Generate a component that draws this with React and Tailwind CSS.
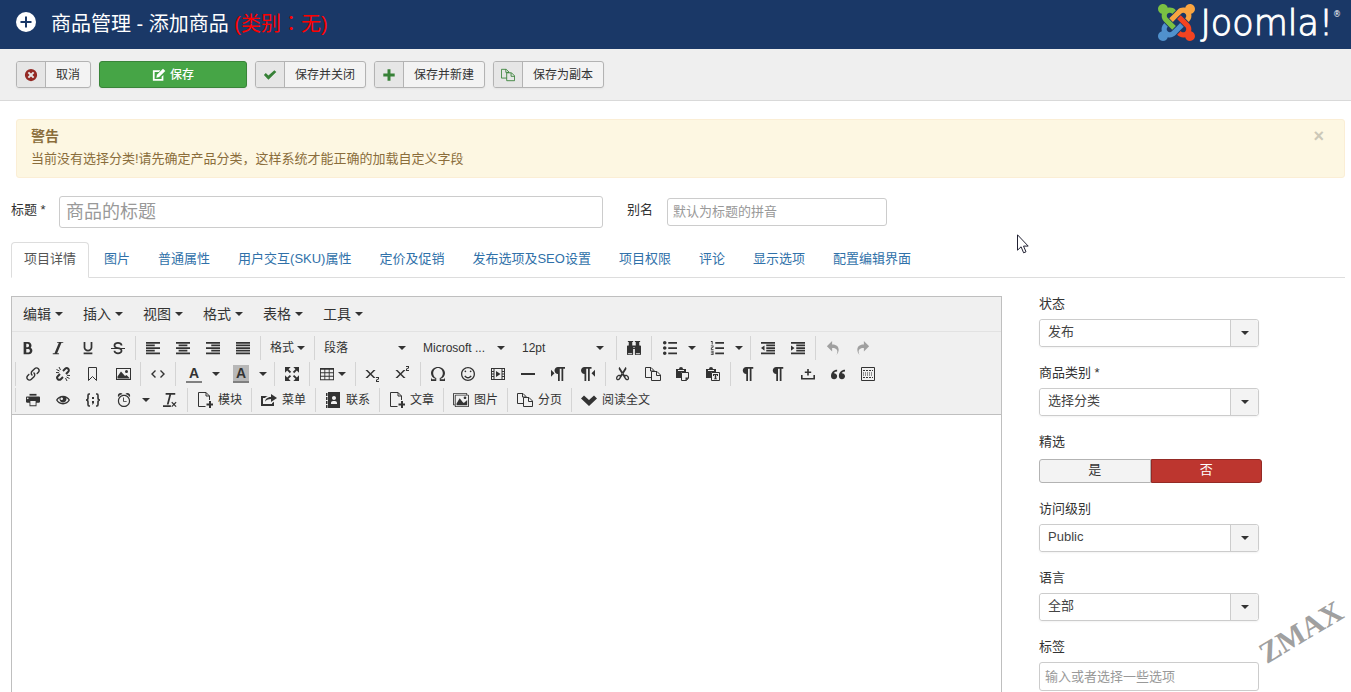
import { useState } from 'react'
import {
  ImAddressBook, ImAlarm, ImBinoculars, ImBold, ImClearFormatting, ImEnlarge, ImEye,
  ImImages, ImIndentDecrease, ImIndentIncrease, ImItalic, ImLink, ImList2, ImListNumbered, ImLtr,
  ImOmega, ImParagraphCenter, ImParagraphJustify, ImParagraphLeft, ImParagraphRight,
  ImPilcrow, ImPrinter, ImQuotesLeft, ImRedo2, ImRtl, ImScissors, ImShare, ImSmile,
  ImStrikethrough, ImSubscript, ImSuperscript, ImTable2, ImUnderline, ImUndo2,
} from 'react-icons/im'

const tabs = ['项目详情', '图片', '普通属性', '用户交互(SKU)属性', '定价及促销', '发布选项及SEO设置', '项目权限', '评论', '显示选项', '配置编辑界面']
const menus = ['编辑', '插入', '视图', '格式', '表格', '工具']

/* ---------- icons ---------- */

const Svg = ({ children, className = 'size-4', ...rest }) => (
  <svg viewBox="0 0 16 16" fill="currentColor" className={className} aria-hidden="true" {...rest}>
    {children}
  </svg>
)

const Line = ({ children }) => (
  <Svg fill="none" stroke="currentColor">{children}</Svg>
)

const UnlinkIcon = () => (
  <Line>
    <path d="M8 5 10.200 2.800a2.100 2.100 0 0 1 3 3L11 8M8 11l-2.200 2.200a2.100 2.100 0 0 1-3-3L5 8" strokeWidth="2" />
    <path d="M1.500 3.500l3 1.500M4 1l1.500 3M1 6.500l3 .2M14.500 12.500l-3-1.500M12 15l-1.500-3M15 9.500l-3-.2" />
  </Line>
)
const BookmarkIcon = () => <Line><path d="M3.500 1.500h8v13L7.500 10.500l-4 4z" /></Line>
const ImageIcon = () => (
  <Svg>
    <path d="M1 2h15v12H1zM2 3v10h13V3z" fillRule="evenodd" />
    <path d="M2.500 12.500v-2l3.500-5 4 4.500 1.500-1 3 3v.5z" />
    <circle cx="11.500" cy="5.500" r="1.500" />
  </Svg>
)
const CodeIcon = () => <Line><path d="M5.500 4.500 2 8l3.500 3.500M10.500 4.500 14 8l-3.500 3.500" strokeWidth="1.400" /></Line>
const MediaIcon = () => (
  <Svg>
    <path d="M1 2h14v12H1zM4.500 3v10h7V3zM2 3v2h1.500V3zM2 6v1.500h1.500V6zM2 8.500V10h1.500V8.500zM2 11v2h1.500v-2zM12.500 3v2H14V3zM12.500 6v1.500H14V6zM12.500 8.500V10H14V8.500zM12.500 11v2H14v-2z" fillRule="evenodd" />
    <path d="M6 5v6l4.500-3z" />
  </Svg>
)
const HrIcon = () => <Svg><path d="M1 7h14v2H1z" /></Svg>
const PasteIcon = () => (
  <Svg>
    <path d="M1 3h3a2 2 0 0 1 4 0h3v3H6v6H1zM3 4v1h6V4z" fillRule="evenodd" />
    <path d="M6.500 6.500h7v5.500L11.500 14.500h-5z" fill="#f0f0f0" stroke="currentColor" />
    <path d="M10.500 11.500H14l-3.500 3.500z" />
  </Svg>
)
const PasteTextIcon = () => (
  <Svg>
    <path d="M1 3h3a2 2 0 0 1 4 0h3v3H6v6H1zM3 4v1h6V4z" fillRule="evenodd" />
    <path d="M6.500 6.500h8v8h-8z" fill="#f0f0f0" stroke="currentColor" />
    <path d="M8 8h5v2h-1V9h-.8v3.500h.8v.8H9v-.8h.8V9H9v1H8z" />
  </Svg>
)
const NbspIcon = () => <Svg><path d="M7.200 3h1.600v2.500h2.400V7H8.800v2.500H7.200V7H4.800V5.500h2.400zM1 9h1.600v3h10.800V9H15v4.500H1z" /></Svg>
const BlocksIcon = () => (
  <Line>
    <path d="M1.500 1.500h13v13h-13z" />
    <path d="M3 4.500h10M3 11.500h10" strokeDasharray="2 1" />
    <path d="M3 7h10M3 9h10" strokeDasharray="1 1" />
  </Line>
)
const BracesIcon = () => (
  <Line>
    <path d="M5 2H4Q3 2 3 3.500V6Q3 8 1 8q2 0 2 2v2.500Q3 14 4 14h1M11 2h1q1 0 1 1.500V6q0 2 2 2-2 0-2 2v2.500q0 1.500-1 1.500h-1" strokeWidth="1.600" />
    <path d="M7 5h2v2H7zM7 9h2v2l-1.200 1.500H7l.5-1.500H7z" fill="currentColor" stroke="none" />
  </Line>
)
const FilePlusIcon = () => (
  <Svg>
    <path d="M8.500 14.500h-7V.5h7.500l3.500 3.500v4M9 .5V4h3.500" fill="none" stroke="currentColor" />
    <path d="M12 9h2v2.500h2.500v2H14V16h-2v-2.500H9.500v-2H12z" />
  </Svg>
)
const FilesIcon = ({ className }) => (
  <Svg className={className} fill="none" stroke="currentColor">
    <path d="M6.500 11.500h-6V1.500h5.500l3 3v1M5.500 1.500V5H9" />
    <path d="M6.500 5.500h5.500L15.500 9v5.500h-9zM11.500 5.500v4h4" />
  </Svg>
)
const ChevronIcon = () => <Svg><path d="M0 6.500 3 3.500 8 8l5-4.500 3 3L8 14z" /></Svg>

const Caret = () => <Svg viewBox="0 0 8 4" className="h-1 w-2"><path d="M0 0h8L4 4z" /></Svg>

// one lobe with its strap, turned a quarter for each colour
const lobe = 'M16.719 14.759 14.220 17.260l-2.370 2.370-.462.466c-1.368 1.365-3.297 1.830-5.047 1.397-.327 1.424-1.604 2.490-3.130 2.490C1.438 23.983 0 22.547 0 20.772c0-1.518 1.055-2.789 2.469-3.123-.446-1.760.016-3.705 1.396-5.080l.179-.180 2.370 2.370-.184.181c-.769.779-.769 2.024 0 2.789.771.780 2.022.780 2.787 0l.465-.465 2.367-2.371 2.502-2.506z'
const lobeTurns = [['#5091cd', 0], ['#7ac143', 90], ['#f9a541', 180], ['#f44321', 270]]

const JoomlaMark = () => (
  <svg viewBox="0 0 24 24" className="size-[37px]" aria-hidden="true">
    {lobeTurns.map(([color, angle]) => (
      <path key={color} d={lobe} fill={color} transform={`rotate(${angle} 12 12)`} />
    ))}
  </svg>
)

/* ---------- top toolbar ---------- */

function ActionButton({ icon, children }) {
  return (
    <button className="flex h-[27px] overflow-hidden rounded-[3px] border border-[#b3b3b3] bg-[#f3f3f3] text-xs shadow-xs">
      <span className="flex h-full w-7 items-center justify-center bg-[#e6e6e6]">{icon}</span>
      <span className="flex h-full items-center border-l border-[#b3b3b3] px-2.5">{children}</span>
    </button>
  )
}

/* ---------- editor toolbar ---------- */

function Group({ children, first }) {
  return <div className={`flex h-6 items-center pr-0.5 ${first ? 'pl-px' : 'border-l border-[#d4d4d4] pl-0.5'}`}>{children}</div>
}

const Tool = ({ icon, label, muted }) => (
  <button aria-label={label} className={`flex h-6 w-[30px] items-center justify-center text-sm ${muted ? 'text-[#a0a0a0]' : ''}`}>
    {icon}
  </button>
)

const Split = ({ icon, label }) => (
  <div className="flex h-6 w-[47px] items-center">
    <button aria-label={label} className="flex w-8 items-center justify-center text-sm">{icon}</button>
    <button aria-label={`${label}选项`} className="flex w-3 justify-center"><Caret /></button>
  </div>
)

const Listbox = ({ children }) => (
  <button className="flex h-6 w-[99px] items-center justify-between pr-2.5 pl-[7px] text-xs">
    {children}
    <Caret />
  </button>
)

const TextTool = ({ icon, children }) => (
  <button className="flex h-6 items-center gap-[5px] px-[7px] text-xs">
    {icon}
    {children}
  </button>
)

function EditorToolbar() {
  return (
    <div className="border-b border-[#bfbfbf] pt-[3px] pb-px">
      <div className="flex h-[26px] items-center">
        <Group first>
          <Tool label="粗体" icon={<ImBold />} />
          <Tool label="斜体" icon={<ImItalic />} />
          <Tool label="下划线" icon={<ImUnderline />} />
          <Tool label="删除线" icon={<ImStrikethrough />} />
        </Group>
        <Group>
          <Tool label="左对齐" icon={<ImParagraphLeft />} />
          <Tool label="居中" icon={<ImParagraphCenter />} />
          <Tool label="右对齐" icon={<ImParagraphRight />} />
          <Tool label="两端对齐" icon={<ImParagraphJustify />} />
        </Group>
        <Group>
          <button className="flex items-center gap-[3px] px-[7px] text-xs">格式<Caret /></button>
        </Group>
        <Group>
          <Listbox>段落</Listbox>
          <Listbox>Microsoft ...</Listbox>
          <Listbox>12pt</Listbox>
        </Group>
        <Group><Tool label="查找替换" icon={<ImBinoculars />} /></Group>
        <Group>
          <Split label="项目符号" icon={<ImList2 />} />
          <Split label="编号" icon={<ImListNumbered />} />
        </Group>
        <Group>
          <Tool label="减少缩进" icon={<ImIndentDecrease />} />
          <Tool label="增加缩进" icon={<ImIndentIncrease />} />
        </Group>
        <Group>
          <Tool muted label="撤销" icon={<ImUndo2 />} />
          <Tool muted label="重做" icon={<ImRedo2 />} />
        </Group>
      </div>
      <div className="flex h-[26px] items-center pl-[3px]">
        <Group>
          <Tool label="链接" icon={<ImLink />} />
          <Tool label="取消链接" icon={<UnlinkIcon />} />
          <Tool label="锚点" icon={<BookmarkIcon />} />
          <Tool label="图片" icon={<ImageIcon />} />
        </Group>
        <Group><Tool label="源代码" icon={<CodeIcon />} /></Group>
        <Group>
          <Split label="文字颜色" icon={<span className="w-4 border-b-2 border-[#808080] text-center leading-4 font-bold">A</span>} />
          <Split label="背景颜色" icon={<span className="w-4 border-b-2 border-[#808080] bg-[#b8b8b8] text-center leading-4 font-bold">A</span>} />
        </Group>
        <Group><Tool label="全屏" icon={<ImEnlarge />} /></Group>
        <Group>
          <button aria-label="表格" className="flex h-6 items-center gap-[3px] px-[7px]"><ImTable2 className="h-3.5 w-4" /><Caret /></button>
        </Group>
        <Group>
          <Tool label="下标" icon={<ImSubscript className="size-4" />} />
          <Tool label="上标" icon={<ImSuperscript className="size-4" />} />
        </Group>
        <Group>
          <Tool label="特殊符号" icon={<ImOmega />} />
          <Tool label="表情" icon={<ImSmile />} />
          <Tool label="媒体" icon={<MediaIcon />} />
          <Tool label="水平线" icon={<HrIcon />} />
          <Tool label="从左到右" icon={<ImLtr />} />
          <Tool label="从右到左" icon={<ImRtl />} />
        </Group>
        <Group>
          <Tool label="剪切" icon={<ImScissors />} />
          <Tool label="复制" icon={<FilesIcon />} />
          <Tool label="粘贴" icon={<PasteIcon />} />
          <Tool label="粘贴为文本" icon={<PasteTextIcon />} />
        </Group>
        <Group>
          <Tool label="显示字符" icon={<ImPilcrow />} />
          <Tool label="显示区块" icon={<ImPilcrow />} />
          <Tool label="不间断空格" icon={<NbspIcon />} />
          <Tool label="引用" icon={<ImQuotesLeft />} />
          <Tool label="模板" icon={<BlocksIcon />} />
        </Group>
      </div>
      <div className="flex h-[26px] items-center pl-[3px]">
        <Group>
          <Tool label="打印" icon={<ImPrinter />} />
          <Tool label="预览" icon={<ImEye />} />
          <Tool label="代码示例" icon={<BracesIcon />} />
          <Split label="日期时间" icon={<ImAlarm />} />
          <Tool label="清除格式" icon={<ImClearFormatting />} />
        </Group>
        <Group><TextTool icon={<FilePlusIcon />}>模块</TextTool></Group>
        <Group><TextTool icon={<ImShare className="size-4" />}>菜单</TextTool></Group>
        <Group><TextTool icon={<ImAddressBook className="size-4" />}>联系</TextTool></Group>
        <Group><TextTool icon={<FilePlusIcon />}>文章</TextTool></Group>
        <Group><TextTool icon={<ImImages className="size-4" />}>图片</TextTool></Group>
        <Group><TextTool icon={<FilesIcon />}>分页</TextTool></Group>
        <Group><TextTool icon={<ChevronIcon />}>阅读全文</TextTool></Group>
      </div>
    </div>
  )
}

/* ---------- sidebar ---------- */

function SelectField({ id, label, options }) {
  return (
    <div className="mb-[18px]">
      <label htmlFor={id} className="mb-2 block leading-[15px]">{label}</label>
      <div className="grid w-[220px] grid-cols-[1fr_28px] rounded-[3px] border border-[#ccc] shadow-xs">
        <select id={id} className="col-span-2 col-start-1 row-start-1 h-[26px] appearance-none rounded-[3px] bg-white pr-8 pb-0.5 pl-2 text-[#444]">
          {options.map((o) => <option key={o}>{o}</option>)}
        </select>
        <span className="pointer-events-none col-start-2 row-start-1 flex items-center justify-center rounded-r-[3px] border-l border-[#ccc] bg-[#f3f3f3]">
          <Caret />
        </span>
      </div>
    </div>
  )
}

export default function App() {
  const [tab, setTab] = useState(tabs[0])
  const [featured, setFeatured] = useState(false)

  return (
    <div className="relative flex h-screen flex-col overflow-hidden bg-white font-['Liberation_Sans','Noto_Sans_CJK_SC',sans-serif] text-[13px] text-[#333]">
      {/* Header */}
      <header className="flex h-[49px] shrink-0 items-center justify-between bg-[#1a3867] pr-2.5 pl-4 text-white">
        <div className="flex items-center gap-[15px] pb-0.5">
          <svg viewBox="0 0 20 20" className="mb-1 size-5" aria-hidden="true">
            <circle cx="10" cy="10" r="10" fill="#fff" />
            <path d="M10 4.500v11M4.500 10h11" stroke="#1a3867" strokeWidth="2" />
          </svg>
          <h1 className="text-xl leading-7">
            商品管理 - 添加商品 <span className="text-[#f00]">(类别<span className="font-['Noto_Sans_CJK_TC']">：</span>无)</span>
          </h1>
        </div>
        <a href="#" aria-label="Joomla!" className="flex items-center gap-1.5 pb-1">
          <JoomlaMark />
          <span className="flex items-start font-['DejaVu_Sans'] font-extralight">
            <span className="text-[35px] leading-9 [-webkit-text-stroke:1px_white]">Joomla!</span>
            <span className="pt-1 text-[8px] leading-3 font-normal">®</span>
          </span>
        </a>
      </header>

      {/* Actions */}
      <div className="flex h-[52px] shrink-0 items-center gap-2 border-b border-[#d9d9d9] bg-[#efefef] px-4">
        <ActionButton icon={
          <Svg className="size-3.5 text-[#942a25]">
            <path d="M8 1a7 7 0 1 0 0 14A7 7 0 0 0 8 1M5.800 4.200 8 6.400l2.200-2.200 1.600 1.600L9.600 8l2.200 2.200-1.600 1.600L8 9.600l-2.200 2.200-1.600-1.600L6.400 8 4.200 5.800z" fillRule="evenodd" />
          </Svg>
        }>取消</ActionButton>
        <button className="flex h-[27px] w-[148px] items-center justify-center gap-1 rounded-[3px] border border-[#398439] bg-[#46a546] text-xs font-medium text-white shadow-xs">
          <Svg className="size-3.5">
            <path d="M1 2.500h8.500L8 4.500H3v8h8V10l2-2v6.500H1z" />
            <path d="m5 11 .6-3.200 7-7 2.600 2.600-7 7z" />
          </Svg>
          保存
        </button>
        <ActionButton icon={<Svg className="size-3.5 text-[#378137]"><path d="m1 8 2.200-2.200L6.200 8.600 13 2.500 15.200 4.700 6.200 13.500z" /></Svg>}>保存并关闭</ActionButton>
        <ActionButton icon={<Svg className="size-3.5 text-[#378137]"><path d="M6.300 1.500h3.400v4.800h4.800v3.400H9.700v4.800H6.300V9.700H1.500V6.300h4.800z" /></Svg>}>保存并新建</ActionButton>
        <ActionButton icon={<FilesIcon className="size-3.5 text-[#378137]" />}>保存为副本</ActionButton>
      </div>

      <main className="flex min-h-0 flex-1 flex-col pt-[18px] pr-1.5 pl-[11px]">
        {/* Warning */}
        <div role="alert" className="ml-[5px] flex h-[59px] shrink-0 items-start justify-between rounded-[3px] border border-[#fbeed5] bg-[#fdf7e2] px-3.5 pt-[7px] text-[#8a6d3b]">
          <div>
            <h4 className="text-sm leading-[18px] font-bold">警告</h4>
            <p className="mt-[5px] leading-[18px]">当前没有选择分类!请先确定产品分类，这样系统才能正确的加载自定义字段</p>
          </div>
          <button aria-label="关闭" className="mr-1.5 text-lg leading-[18px] font-bold text-[#ccc8b8]">×</button>
        </div>

        {/* Title and alias */}
        <div className="mt-[18px] flex shrink-0 items-center">
          <label htmlFor="title" className="w-12 pb-1">标题 *</label>
          <input id="title" placeholder="商品的标题" className="h-8 w-[544px] rounded-[3px] border border-[#ccc] px-1.5 text-lg placeholder:text-[#999]" />
          <label htmlFor="alias" className="ml-6 w-10 pb-1">别名</label>
          <input id="alias" placeholder="默认为标题的拼音" className="h-7 w-[220px] rounded-[3px] border border-[#ccc] px-[5px] pb-0.5 placeholder:text-[#999]" />
        </div>

        {/* Tabs */}
        <nav role="tablist" className="mt-3.5 flex shrink-0 gap-0.5 border-b border-[#ddd]">
          {tabs.map((t) => (
            <button
              key={t}
              role="tab"
              aria-selected={t === tab}
              onClick={() => setTab(t)}
              className={`-mb-px h-9 rounded-t border px-3 pb-0.5 whitespace-nowrap ${t === tab ? 'border-[#ddd] border-b-white bg-white text-[#555]' : 'border-transparent text-[#3071a9]'}`}
            >
              {t}
            </button>
          ))}
        </nav>

        <div className="mt-[18px] flex min-h-0 flex-1">
          {/* Editor */}
          <section className="flex min-w-0 flex-1 flex-col border border-b-0 border-[#bfbfbf]">
            <div className="bg-[#f0f0f0]">
              <div className="flex h-[35px] items-center border-b border-[#e2e2e2] px-1 text-sm">
                {menus.map((m) => (
                  <button key={m} className="flex w-[60px] items-center gap-1 pl-[7px]">{m}<Caret /></button>
                ))}
              </div>
              <EditorToolbar />
            </div>
            <textarea aria-label="正文" className="min-h-0 flex-1 resize-none bg-white p-2 outline-none" />
          </section>

          {/* Sidebar */}
          <aside className="ml-[37px] w-[306px] shrink-0">
            <SelectField id="state" label="状态" options={['发布', '未发布']} />
            <SelectField id="category" label="商品类别 *" options={['选择分类']} />
            <fieldset className="mb-[18px]">
              <legend className="mb-2.5 leading-[15px]">精选</legend>
              <div className="flex w-[223px]">
                {[['是', true], ['否', false]].map(([label, value]) => (
                  <label
                    key={label}
                    className={`flex h-6 flex-1 items-center justify-center border pb-0.5 first:rounded-l-[3px] last:rounded-r-[3px] ${
                      featured !== value ? 'border-[#b3b3b3] bg-[#f3f3f3]' : value ? 'border-[#398439] bg-[#46a546] text-white' : 'border-[#942a25] bg-[#bd362f] text-white'
                    }`}
                  >
                    <input type="radio" name="featured" className="sr-only" checked={featured === value} onChange={() => setFeatured(value)} />
                    {label}
                  </label>
                ))}
              </div>
            </fieldset>
            <SelectField id="access" label="访问级别" options={['Public', 'Registered']} />
            <SelectField id="language" label="语言" options={['全部']} />
            <label htmlFor="tags" className="mb-2 block leading-[15px]">标签</label>
            <input id="tags" placeholder="输入或者选择一些选项" className="h-[29px] w-[220px] rounded-[3px] border border-[#ccc] px-[5px] placeholder:text-[#999]" />
          </aside>
        </div>
      </main>

      {/* Watermark */}
      <div className="pointer-events-none absolute right-1 bottom-[42px] rotate-[-31deg] font-['Liberation_Serif'] text-[30px] leading-9 font-bold text-[#a0a0a0]">ZMAX</div>

      {/* Mouse pointer */}
      <svg viewBox="0 0 12 20" className="pointer-events-none absolute top-[234px] left-[1017px] h-5 w-3" aria-hidden="true">
        <path d="M.5.800v15.400l3.600-3.400 2.500 6 2.400-1-2.500-5.700h4.700z" fill="#fff" stroke="#223" />
      </svg>
    </div>
  )
}
